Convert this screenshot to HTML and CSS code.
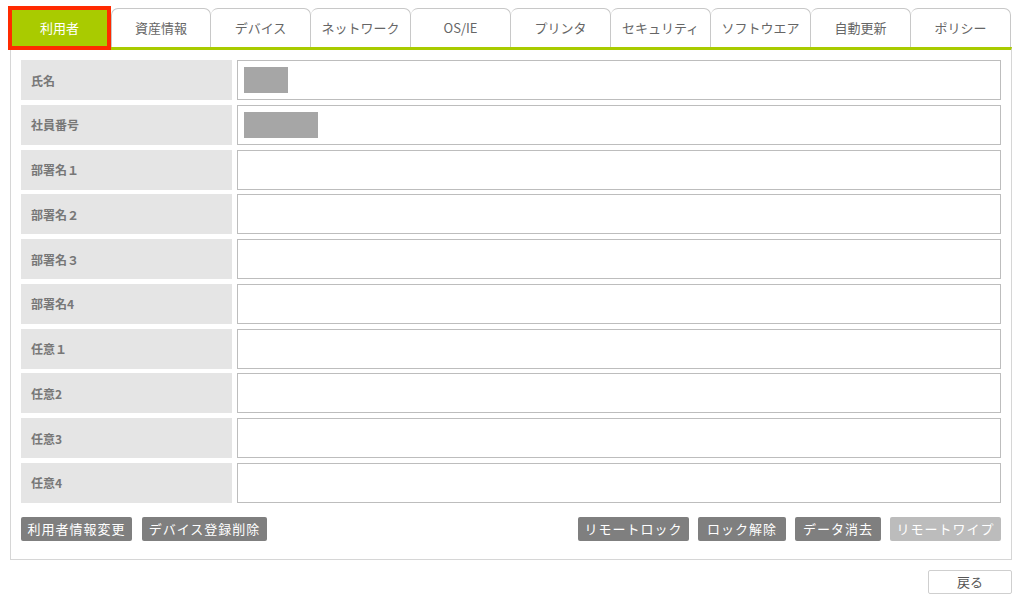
FILE: index.html
```html
<!DOCTYPE html>
<html lang="ja">
<head>
<meta charset="utf-8">
<title>利用者</title>
<link rel="stylesheet" href="styles.css">
</head>
<body>
<div class="page">
  <div class="tabs">
    <div class="tab active">利用者</div>
    <div class="tab">資産情報</div>
    <div class="tab">デバイス</div>
    <div class="tab">ネットワーク</div>
    <div class="tab">OS/IE</div>
    <div class="tab">プリンタ</div>
    <div class="tab">セキュリティ</div>
    <div class="tab">ソフトウエア</div>
    <div class="tab">自動更新</div>
    <div class="tab">ポリシー</div>
  </div>
  <div class="panel">
    <div class="rows">
      <div class="row"><div class="label">氏名</div><div class="field"><span class="mask mask-s"></span></div></div>
      <div class="row"><div class="label">社員番号</div><div class="field"><span class="mask mask-l"></span></div></div>
      <div class="row"><div class="label">部署名１</div><div class="field"></div></div>
      <div class="row"><div class="label">部署名２</div><div class="field"></div></div>
      <div class="row"><div class="label">部署名３</div><div class="field"></div></div>
      <div class="row"><div class="label">部署名4</div><div class="field"></div></div>
      <div class="row"><div class="label">任意１</div><div class="field"></div></div>
      <div class="row"><div class="label">任意2</div><div class="field"></div></div>
      <div class="row"><div class="label">任意3</div><div class="field"></div></div>
      <div class="row"><div class="label">任意4</div><div class="field"></div></div>
    </div>
    <div class="actions">
      <div class="group left">
        <button class="btn w-111">利用者情報変更</button>
        <button class="btn w-125">デバイス登録削除</button>
      </div>
      <div class="group right">
        <button class="btn w-111">リモートロック</button>
        <button class="btn w-88">ロック解除</button>
        <button class="btn w-86">データ消去</button>
        <button class="btn w-111 disabled">リモートワイプ</button>
      </div>
    </div>
  </div>
  <div class="footer">
    <button class="back">戻る</button>
  </div>
</div>
</body>
</html>
```
FILE: styles.css
```css
* { box-sizing: border-box; }
html, body { margin: 0; padding: 0; background: #fff; }
body {
  font-family: "Noto Sans CJK JP", "Noto Sans", "Liberation Sans", sans-serif;
  color: #666;
  width: 1024px;
  height: 610px;
  overflow: hidden;
}
.page { padding-top: 8px; }

.tabs {
  display: flex;
  padding-left: 8px;
  height: 39px;
}
.tab {
  width: 100px;
  height: 39px;
  border: 1px solid #c8c8c8;
  border-left-width: 0;
  border-bottom: 0;
  border-radius: 7px 7px 0 0;
  background: #fff;
  font-size: 13px;
  color: #666;
  display: flex;
  align-items: center;
  justify-content: center;
  padding-bottom: 2px;
}
.tab.active + .tab { border-left-width: 1px; }
.tab.active {
  width: 103px;
  height: 44px;
  margin-top: -2px;
  border: 4px solid #ff2a00;
  border-radius: 0;
  background: #a9cb00;
  color: #fff;
  position: relative;
  z-index: 1;
  padding-bottom: 1px;
}

.panel {
  margin-left: 10px;
  width: 1002px;
  border: 1px solid #d6d6d6;
  border-top: 3px solid #a9cb00;
  padding: 10px 10px 18px 10px;
}
.rows {
  display: flex;
  flex-direction: column;
  gap: 4.75px;
}
.row {
  display: flex;
  gap: 5px;
  height: 40px;
}
.label {
  width: 211px;
  flex: none;
  background: #e5e5e5;
  font-size: 12px;
  font-weight: bold;
  color: #777;
  display: flex;
  align-items: center;
  padding-left: 10px;
}
.field {
  flex: 1;
  border: 1px solid #bdbdbd;
  background: #fff;
  padding: 6px;
  display: flex;
  align-items: flex-start;
}
.mask {
  display: block;
  height: 26px;
  background: #a6a6a6;
}
.mask-s { width: 44px; }
.mask-l { width: 74px; }

.actions {
  display: flex;
  justify-content: space-between;
  margin-top: 14px;
}
.group { display: flex; }
.group.left { gap: 10px; }
.group.right { gap: 9px; }
.btn {
  font-family: inherit;
  height: 24px;
  border: 0;
  border-radius: 2px;
  background: #7f7f7f;
  color: #fff;
  font-size: 13px;
  letter-spacing: 1px;
  padding: 0;
  text-align: center;
  line-height: 24px;
  white-space: nowrap;
}
.w-111 { width: 111px; }
.w-125 { width: 125px; }
.w-88 { width: 88px; }
.w-86 { width: 86px; }
.btn.disabled { background: #bcbcbc; }

.footer {
  display: flex;
  justify-content: flex-end;
  width: 1012px;
  margin-top: 10px;
}
.back {
  font-family: inherit;
  width: 84px;
  height: 24px;
  border: 1px solid #cfcfcf;
  border-radius: 2px;
  background: #fff;
  color: #555;
  font-size: 13px;
  padding: 0;
}
```
